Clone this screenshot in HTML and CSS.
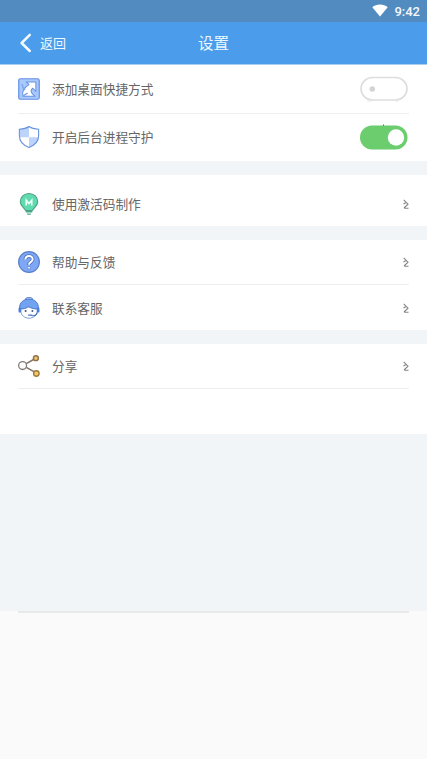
FILE: index.html
```html
<!DOCTYPE html>
<html lang="zh-CN">
<head>
<meta charset="utf-8">
<title>设置</title>
<link rel="stylesheet" href="styles.css">
</head>
<body>
<div class="status">
  <svg class="wifi" width="16" height="13" viewBox="0 0 16 13"><path d="M8 12.500 0.300 3.300C2.400 1.500 5 .6 8 .6s5.600.9 7.700 2.700z" fill="#fff"/></svg>
  <span class="time">9:42</span>
</div>
<header class="bar">
  <a class="back">
    <svg width="13" height="20" viewBox="0 0 13 20"><path d="M10.800 1.800 2.600 10l8.200 8" fill="none" stroke="#f2faff" stroke-width="2.500" stroke-linecap="round" stroke-linejoin="round"/></svg>
    <span>返回</span>
  </a>
  <h1>设置</h1>
</header>
<main>
  <section class="group">
    <div class="row tall line">
      <svg class="icon" viewBox="0 0 24 24"><rect x=".8" y=".8" width="22.400" height="22.400" rx="2" fill="#a9c8fb" stroke="#6491e6" stroke-width="1.300"/><path d="M9 4.300h10.500v10.200l-3.300-3.300c-2.300 1.500-2.800 3.700-.2 6.300l2.800 2.500H5.500c-1.500-5 .8-9.300 6.500-12.700z" fill="#fff" stroke="#6491e6" stroke-width="1.100" stroke-linejoin="round"/><path d="M4.500 6.500c.2 3.200 1.300 5.200 3.300 6.500M5.500 19.500l5-3" fill="none" stroke="#7da5ec" stroke-width="1.500"/></svg>
      <span class="label">添加桌面快捷方式</span>
      <svg class="toggle" width="48" height="28" viewBox="0 0 48 28"><rect x="1" y="2.500" width="46" height="22.500" rx="11.250" fill="#fff" stroke="#dedede" stroke-width="1.700"/><circle cx="12.300" cy="14" r="2.800" fill="#d3d3d3"/><path d="M7 26h5M35 26h4" stroke="#e7e7e7"/></svg>
    </div>
    <div class="row tall">
      <svg class="icon" viewBox="0 0 24 24"><path d="M12 .6c2.800 2 6.300 2.800 10.500 3v7c0 5.900-3.800 10.200-10.500 12.800C5.300 20.800 1.500 16.500 1.500 10.600v-7c4.200-.2 7.700-1 10.500-3z" fill="#fff"/><path d="M12 .6v11.700H1.500V3.600c4.200-.2 7.700-1 10.500-3zM12 12.300h10.300c-.6 4.900-4.400 8.900-10.300 11.100z" fill="#bcd3fb"/><path d="M12 .6c2.800 2 6.300 2.800 10.500 3v7c0 5.900-3.800 10.200-10.500 12.800C5.300 20.800 1.500 16.500 1.500 10.600v-7c4.200-.2 7.700-1 10.500-3z" fill="none" stroke="#6892df" stroke-width="1.200"/></svg>
      <span class="label">开启后台进程守护</span>
      <svg class="toggle" width="48" height="28" viewBox="0 0 48 28"><rect x="0" y="2.500" width="47.500" height="24" rx="12" fill="#6bcd6d"/><circle cx="36" cy="14.500" r="8.200" fill="#fff"/><path d="M23.500 1.500v1.300" stroke="#4b6b4b"/></svg>
    </div>
  </section>
  <section class="group">
    <div class="row code">
      <svg class="icon" viewBox="0 0 24 24"><path d="M12 .6c-5.500 0-9.500 3.900-9.500 8.900 0 4.700 4.400 6.400 5.900 9.700h7.200c1.500-3.300 5.900-5 5.900-9.700 0-5-4-8.900-9.500-8.900z" fill="#60dbb0" stroke="#4f9f82" stroke-width="1.200"/><path d="M9 13.500V8l3 3.500L15 8v5.500" fill="none" stroke="#effff9" stroke-width="1.800"/><path d="M8.500 20.500h7M10 23h4" stroke="#45a987" stroke-width="1.500"/></svg>
      <span class="label">使用激活码制作</span>
      <svg class="arrow" viewBox="0 0 6 10"><path d="M.7.800 5 5.200 1 9M.5 5l3-1.800M1.200 9.200h4.300" fill="none" stroke="#858585" stroke-width="1.100"/></svg>
    </div>
  </section>
  <section class="group">
    <div class="row line">
      <svg class="icon" viewBox="0 0 24 24"><circle cx="12" cy="12" r="11.300" fill="#7ea8f5" stroke="#587fc8" stroke-width="1.300"/><path d="M8 9.200c.2-5 8-4.900 8-.3 0 3-4 2.900-4 6.400" fill="none" stroke="#4269b4" stroke-width="3.800"/><path d="M8 9.200c.2-5 8-4.900 8-.3 0 3-4 2.900-4 6.200" fill="none" stroke="#fff" stroke-width="2.200"/><circle cx="12" cy="18.300" r="1.500" fill="#fff" stroke="#4269b4" stroke-width=".6"/></svg>
      <span class="label">帮助与反馈</span>
      <svg class="arrow" viewBox="0 0 6 10"><path d="M.7.800 5 5.200 1 9M.5 5l3-1.800M1.200 9.200h4.300" fill="none" stroke="#858585" stroke-width="1.100"/></svg>
    </div>
    <div class="row">
      <svg class="icon" viewBox="0 0 24 24"><ellipse cx="12" cy="2.300" rx="4" ry="1.800" fill="#bcd5fc" stroke="#547fc9"/><path d="M3 11h18v3.500c0 11.500-18 11.500-18 0z" fill="#fff" stroke="#7597cf"/><path d="M1.700 13C1.200 6 6 2.300 12 2.300S22.800 6 22.300 13h-2.800c-3.700-.2-6.500-1.200-8-3-1.200 1.700-3.700 2.800-7 3z" fill="#72a2f2" stroke="#4776c6"/><rect x=".6" y="11.500" width="2.800" height="5.500" rx="1.300" fill="#4b7ed8"/><rect x="20.600" y="11.500" width="2.800" height="5.500" rx="1.300" fill="#4b7ed8"/><circle cx="8.300" cy="15.300" r="1.100" fill="#36588e"/><circle cx="15.700" cy="15.300" r="1.100" fill="#36588e"/><path d="M21 17c-.8 3-3.500 4-6 3.200M11 19.800h4.500" fill="none" stroke="#4673be" stroke-width="1.300"/></svg>
      <span class="label">联系客服</span>
      <svg class="arrow" viewBox="0 0 6 10"><path d="M.7.800 5 5.200 1 9M.5 5l3-1.800M1.200 9.200h4.300" fill="none" stroke="#858585" stroke-width="1.100"/></svg>
    </div>
  </section>
  <section class="group last">
    <div class="row line">
      <svg class="icon" viewBox="0 0 24 24"><path d="m9 9.500 8-4.600M9 13.500l8.300 4.700" stroke="#7e7468" stroke-width="1.600"/><circle cx="5" cy="11.500" r="4.300" fill="#fff" stroke="#817a74" stroke-width="1.400"/><circle cx="19.500" cy="3.500" r="2.700" fill="#edc675" stroke="#927044" stroke-width="1.500"/><circle cx="20" cy="20.200" r="3" fill="#f3c764" stroke="#a07a3e" stroke-width="1.500"/></svg>
      <span class="label">分享</span>
      <svg class="arrow" viewBox="0 0 6 10"><path d="M.7.800 5 5.200 1 9M.5 5l3-1.800M1.200 9.200h4.300" fill="none" stroke="#858585" stroke-width="1.100"/></svg>
    </div>
  </section>
</main>
<footer class="foot"></footer>
</body>
</html>
```
FILE: styles.css
```css
* { box-sizing: border-box; }
body {
  margin: 0;
  height: 759px;
  display: flex;
  flex-direction: column;
  overflow: hidden;
  background: #fafafa;
  color: #666;
  font-family: "Noto Sans CJK SC", sans-serif;
  font-size: 12.700px;
}
svg { display: block; flex: none; }
.status {
  height: 22px;
  flex: none;
  display: flex;
  justify-content: flex-end;
  align-items: center;
  gap: 6px;
  padding-right: 7px;
  background: #528bc0;
}
.wifi { margin-bottom: 2px; }
.time {
  padding-top: 1px;
  font: 500 13px/22px Roboto, sans-serif;
  color: #f4f8fc;
}
.bar {
  height: 43px;
  flex: none;
  display: grid;
  grid-template-columns: 1fr auto 1fr;
  align-items: center;
  background: #4b9deb;
  border-bottom: 1px solid #a9cdef;
  color: #eef8ff;
}
.back {
  display: flex;
  align-items: center;
  gap: 8px;
  padding-left: 19px;
  font-size: 13px;
}
.back span { padding-bottom: 2px; }
h1 {
  margin: 0;
  padding-bottom: 2px;
  font-size: 15.500px;
  font-weight: 400;
  line-height: 20px;
}
main {
  height: 546px;
  flex: none;
  display: flex;
  flex-direction: column;
  gap: 14px;
  background: #f1f5f8;
}
.group {
  background: #fff;
  padding: 0 18px;
}
.last { height: 90px; }
.row {
  height: 45px;
  display: flex;
  align-items: center;
}
.row.tall { height: 48px; }
.row.tall.line { height: 49px; }
.row.tall:last-child { height: 47px; padding-bottom: 1px; }
.row.code { height: 51px; padding-top: 6px; }
.line { border-bottom: 1px solid #eee; }
.icon {
  width: 22px;
  height: 22px;
  margin-right: 12px;
}
.label { flex: 1; line-height: 20px; }
.toggle { margin-right: 1px; }
.arrow { width: 6px; height: 10px; }
.foot {
  margin: 0 18px;
  border-top: 2px solid #e8e9e9;
}
```
